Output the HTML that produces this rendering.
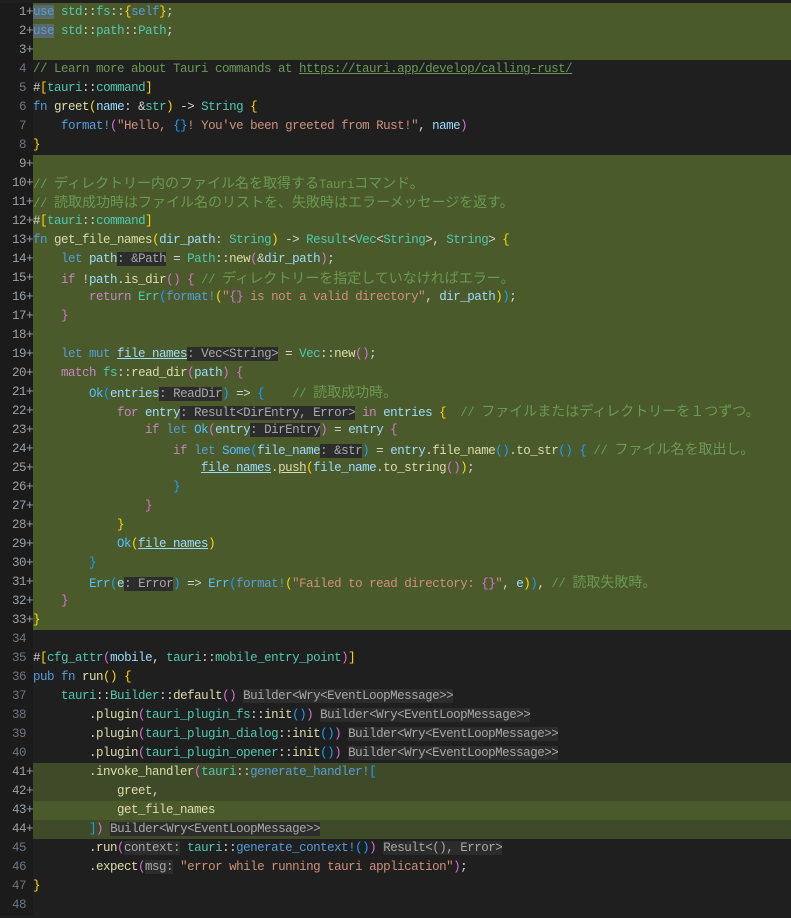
<!DOCTYPE html><html><head><meta charset="utf-8"><style>
body{margin:0;width:791px;height:918px;background:#1f1f1f;overflow:hidden;font-family:"Liberation Mono","Noto Sans CJK JP",monospace;font-size:12.5px;letter-spacing:-0.5px;color:#d4d4d4}
.l{position:absolute;left:0;width:791px;height:19px;line-height:19px;white-space:pre}
.a{background:#4b5a2b}.a2{background:#3f4a28}
.n{position:absolute;left:0;width:33px;background:#1b1b1b;height:19px;color:#6e7681;text-align:right}
.a .n,.a2 .n{color:#9aa0a6}
.x{position:absolute;left:33px}
.j{font-family:"Noto Sans CJK JP",sans-serif;font-size:14px;letter-spacing:0}
.k{color:#569cd6}.c{color:#c586c0}.t{color:#4ec9b0}.f{color:#dcdcaa}.v{color:#9cdcfe}.s{color:#ce9178}.m{color:#6a9955}
.b1{color:#ffd700}.b2{color:#da70d6}.b3{color:#179fff}.u{text-decoration:underline}
.h{background:#2c2c2c;color:#a8a8a8}
</style></head><body>
<div class="l a" style="top:3px"><span class="n">1+</span><span class="x"><span class="k" style="background:#5a6a6a">use</span> <span class="t">std</span>::<span class="t">fs</span>::<span class="b1">{</span><span class="k">self</span><span class="b1">}</span>;</span></div>
<div class="l a" style="top:22px"><span class="n">2+</span><span class="x"><span class="k" style="background:#5a6a6a">use</span> <span class="t">std</span>::<span class="t">path</span>::<span class="t">Path</span>;</span></div>
<div class="l a" style="top:41px"><span class="n">3+</span></div>
<div class="l" style="top:60px"><span class="n">4 </span><span class="x"><span class="m">// Learn more about Tauri commands at <span class="u">https://tauri.app/develop/calling-rust/</span></span></span></div>
<div class="l" style="top:79px"><span class="n">5 </span><span class="x">#<span class="b1">[</span><span class="t">tauri</span>::<span class="t">command</span><span class="b1">]</span></span></div>
<div class="l" style="top:98px"><span class="n">6 </span><span class="x"><span class="k">fn</span> <span class="f">greet</span><span class="b1">(</span><span class="v">name</span>: &amp;<span class="t">str</span><span class="b1">)</span> -&gt; <span class="t">String</span> <span class="b1">{</span></span></div>
<div class="l" style="top:117px"><span class="n">7 </span><span class="x">    <span class="k">format!</span><span class="b2">(</span><span class="s">"Hello, </span><span class="b3">{}</span><span class="s">! You've been greeted from Rust!"</span>, <span class="v">name</span><span class="b2">)</span></span></div>
<div class="l" style="top:136px"><span class="n">8 </span><span class="x"><span class="b1">}</span></span></div>
<div class="l a" style="top:155px"><span class="n">9+</span></div>
<div class="l a" style="top:174px"><span class="n">10+</span><span class="x"><span class="m">// <span class="j">ディレクトリー内のファイル名を取得する</span>Tauri<span class="j">コマンド。</span></span></span></div>
<div class="l a" style="top:193px"><span class="n">11+</span><span class="x"><span class="m">// <span class="j">読取成功時はファイル名のリストを、失敗時はエラーメッセージを返す。</span></span></span></div>
<div class="l a" style="top:212px"><span class="n">12+</span><span class="x">#<span class="b1">[</span><span class="t">tauri</span>::<span class="t">command</span><span class="b1">]</span></span></div>
<div class="l a" style="top:231px"><span class="n">13+</span><span class="x"><span class="k">fn</span> <span class="f">get_file_names</span><span class="b1">(</span><span class="v">dir_path</span>: <span class="t">String</span><span class="b1">)</span> -&gt; <span class="t">Result</span>&lt;<span class="t">Vec</span>&lt;<span class="t">String</span>&gt;, <span class="t">String</span>&gt; <span class="b1">{</span></span></div>
<div class="l a" style="top:250px"><span class="n">14+</span><span class="x">    <span class="k">let</span> <span class="v">path</span><span class="h">: &amp;Path</span> = <span class="t">Path</span>::<span class="f">new</span><span class="b2">(</span>&amp;<span class="v">dir_path</span><span class="b2">)</span>;</span></div>
<div class="l a" style="top:269px"><span class="n">15+</span><span class="x">    <span class="c">if</span> !<span class="v">path</span>.<span class="f">is_dir</span><span class="b2">()</span> <span class="b2">{</span> <span class="m">// <span class="j">ディレクトリーを指定していなければエラー。</span></span></span></div>
<div class="l a" style="top:288px"><span class="n">16+</span><span class="x">        <span class="c">return</span> <span class="t">Err</span><span class="b3">(</span><span class="k">format!</span><span class="b1">(</span><span class="s">"</span><span class="b2">{}</span><span class="s"> is not a valid directory"</span>, <span class="v">dir_path</span><span class="b1">)</span><span class="b3">)</span>;</span></div>
<div class="l a" style="top:307px"><span class="n">17+</span><span class="x">    <span class="b2">}</span></span></div>
<div class="l a" style="top:326px"><span class="n">18+</span></div>
<div class="l a" style="top:345px"><span class="n">19+</span><span class="x">    <span class="k">let mut</span> <span class="v u">file_names</span><span class="h">: Vec&lt;String&gt;</span> = <span class="t">Vec</span>::<span class="f">new</span><span class="b2">()</span>;</span></div>
<div class="l a" style="top:364px"><span class="n">20+</span><span class="x">    <span class="c">match</span> <span class="t">fs</span>::<span class="f">read_dir</span><span class="b2">(</span><span class="v">path</span><span class="b2">)</span> <span class="b2">{</span></span></div>
<div class="l a" style="top:383px"><span class="n">21+</span><span class="x">        <span class="t" style="color:#4fc1ff">Ok</span><span class="b3">(</span><span class="v">entries</span><span class="h">: ReadDir</span><span class="b3">)</span> =&gt; <span class="b3">{</span>    <span class="m">// <span class="j">読取成功時。</span></span></span></div>
<div class="l a" style="top:402px"><span class="n">22+</span><span class="x">            <span class="c">for</span> <span class="v">entry</span><span class="h">: Result&lt;DirEntry, Error&gt;</span> <span class="c">in</span> <span class="v">entries</span> <span class="b1">{</span>  <span class="m">// <span class="j">ファイルまたはディレクトリーを１つずつ。</span></span></span></div>
<div class="l a" style="top:421px"><span class="n">23+</span><span class="x">                <span class="c">if</span> <span class="k">let</span> <span class="t" style="color:#4fc1ff">Ok</span><span class="b2">(</span><span class="v">entry</span><span class="h">: DirEntry</span><span class="b2">)</span> = <span class="v">entry</span> <span class="b2">{</span></span></div>
<div class="l a" style="top:440px"><span class="n">24+</span><span class="x">                    <span class="c">if</span> <span class="k">let</span> <span class="t" style="color:#4fc1ff">Some</span><span class="b3">(</span><span class="v">file_name</span><span class="h">: &amp;str</span><span class="b3">)</span> = <span class="v">entry</span>.<span class="f">file_name</span><span class="b3">()</span>.<span class="f">to_str</span><span class="b3">()</span> <span class="b3">{</span> <span class="m">// <span class="j">ファイル名を取出し。</span></span></span></div>
<div class="l a" style="top:459px"><span class="n">25+</span><span class="x">                        <span class="v u">file_names</span>.<span class="f u">push</span><span class="b1">(</span><span class="v">file_name</span>.<span class="f">to_string</span><span class="b2">()</span><span class="b1">)</span>;</span></div>
<div class="l a" style="top:478px"><span class="n">26+</span><span class="x">                    <span class="b3">}</span></span></div>
<div class="l a" style="top:497px"><span class="n">27+</span><span class="x">                <span class="b2">}</span></span></div>
<div class="l a" style="top:516px"><span class="n">28+</span><span class="x">            <span class="b1">}</span></span></div>
<div class="l a" style="top:535px"><span class="n">29+</span><span class="x">            <span class="t" style="color:#4fc1ff">Ok</span><span class="b1">(</span><span class="v u">file_names</span><span class="b1">)</span></span></div>
<div class="l a" style="top:554px"><span class="n">30+</span><span class="x">        <span class="b3">}</span></span></div>
<div class="l a" style="top:573px"><span class="n">31+</span><span class="x">        <span class="t" style="color:#4fc1ff">Err</span><span class="b3">(</span><span class="v">e</span><span class="h">: Error</span><span class="b3">)</span> =&gt; <span class="t" style="color:#4fc1ff">Err</span><span class="b3">(</span><span class="k">format!</span><span class="b1">(</span><span class="s">"Failed to read directory: </span><span class="b2">{}</span><span class="s">"</span>, <span class="v">e</span><span class="b1">)</span><span class="b3">)</span>, <span class="m">// <span class="j">読取失敗時。</span></span></span></div>
<div class="l a" style="top:592px"><span class="n">32+</span><span class="x">    <span class="b2">}</span></span></div>
<div class="l a" style="top:611px"><span class="n">33+</span><span class="x"><span class="b1">}</span></span></div>
<div class="l" style="top:630px"><span class="n">34 </span></div>
<div class="l" style="top:649px"><span class="n">35 </span><span class="x">#<span class="b1">[</span><span class="t">cfg_attr</span><span class="b2">(</span><span class="v">mobile</span>, <span class="t">tauri</span>::<span class="t">mobile_entry_point</span><span class="b2">)</span><span class="b1">]</span></span></div>
<div class="l" style="top:668px"><span class="n">36 </span><span class="x"><span class="k">pub fn</span> <span class="f">run</span><span class="b1">()</span> <span class="b1">{</span></span></div>
<div class="l" style="top:687px"><span class="n">37 </span><span class="x">    <span class="t">tauri</span>::<span class="t">Builder</span>::<span class="f">default</span><span class="b2">()</span> <span class="h">Builder&lt;Wry&lt;EventLoopMessage&gt;&gt;</span></span></div>
<div class="l" style="top:706px"><span class="n">38 </span><span class="x">        .<span class="f">plugin</span><span class="b2">(</span><span class="t">tauri_plugin_fs</span>::<span class="f">init</span><span class="b3">()</span><span class="b2">)</span> <span class="h">Builder&lt;Wry&lt;EventLoopMessage&gt;&gt;</span></span></div>
<div class="l" style="top:725px"><span class="n">39 </span><span class="x">        .<span class="f">plugin</span><span class="b2">(</span><span class="t">tauri_plugin_dialog</span>::<span class="f">init</span><span class="b3">()</span><span class="b2">)</span> <span class="h">Builder&lt;Wry&lt;EventLoopMessage&gt;&gt;</span></span></div>
<div class="l" style="top:744px"><span class="n">40 </span><span class="x">        .<span class="f">plugin</span><span class="b2">(</span><span class="t">tauri_plugin_opener</span>::<span class="f">init</span><span class="b3">()</span><span class="b2">)</span> <span class="h">Builder&lt;Wry&lt;EventLoopMessage&gt;&gt;</span></span></div>
<div class="l a2" style="top:763px"><span class="n">41+</span><span class="x">        .<span class="f">invoke_handler</span><span class="b2">(</span><span class="t">tauri</span>::<span class="k">generate_handler!</span><span class="b3">[</span></span></div>
<div class="l a2" style="top:782px"><span class="n">42+</span><span class="x">            <span class="f">greet</span>,</span></div>
<div class="l a" style="top:801px"><span class="n">43+</span><span class="x">            <span class="f">get_file_names</span></span></div>
<div class="l a2" style="top:820px"><span class="n">44+</span><span class="x">        <span class="b3">]</span><span class="b2">)</span> <span class="h">Builder&lt;Wry&lt;EventLoopMessage&gt;&gt;</span></span></div>
<div class="l" style="top:839px"><span class="n">45 </span><span class="x">        .<span class="f">run</span><span class="b2">(</span><span class="h">context:</span> <span class="t">tauri</span>::<span class="k">generate_context!</span><span class="b3">()</span><span class="b2">)</span> <span class="h">Result&lt;(), Error&gt;</span></span></div>
<div class="l" style="top:858px"><span class="n">46 </span><span class="x">        .<span class="f">expect</span><span class="b2">(</span><span class="h">msg:</span> <span class="s">"error while running tauri application"</span><span class="b2">)</span>;</span></div>
<div class="l" style="top:877px"><span class="n">47 </span><span class="x"><span class="b1">}</span></span></div>
<div class="l" style="top:896px"><span class="n">48 </span></div>
</body></html>
